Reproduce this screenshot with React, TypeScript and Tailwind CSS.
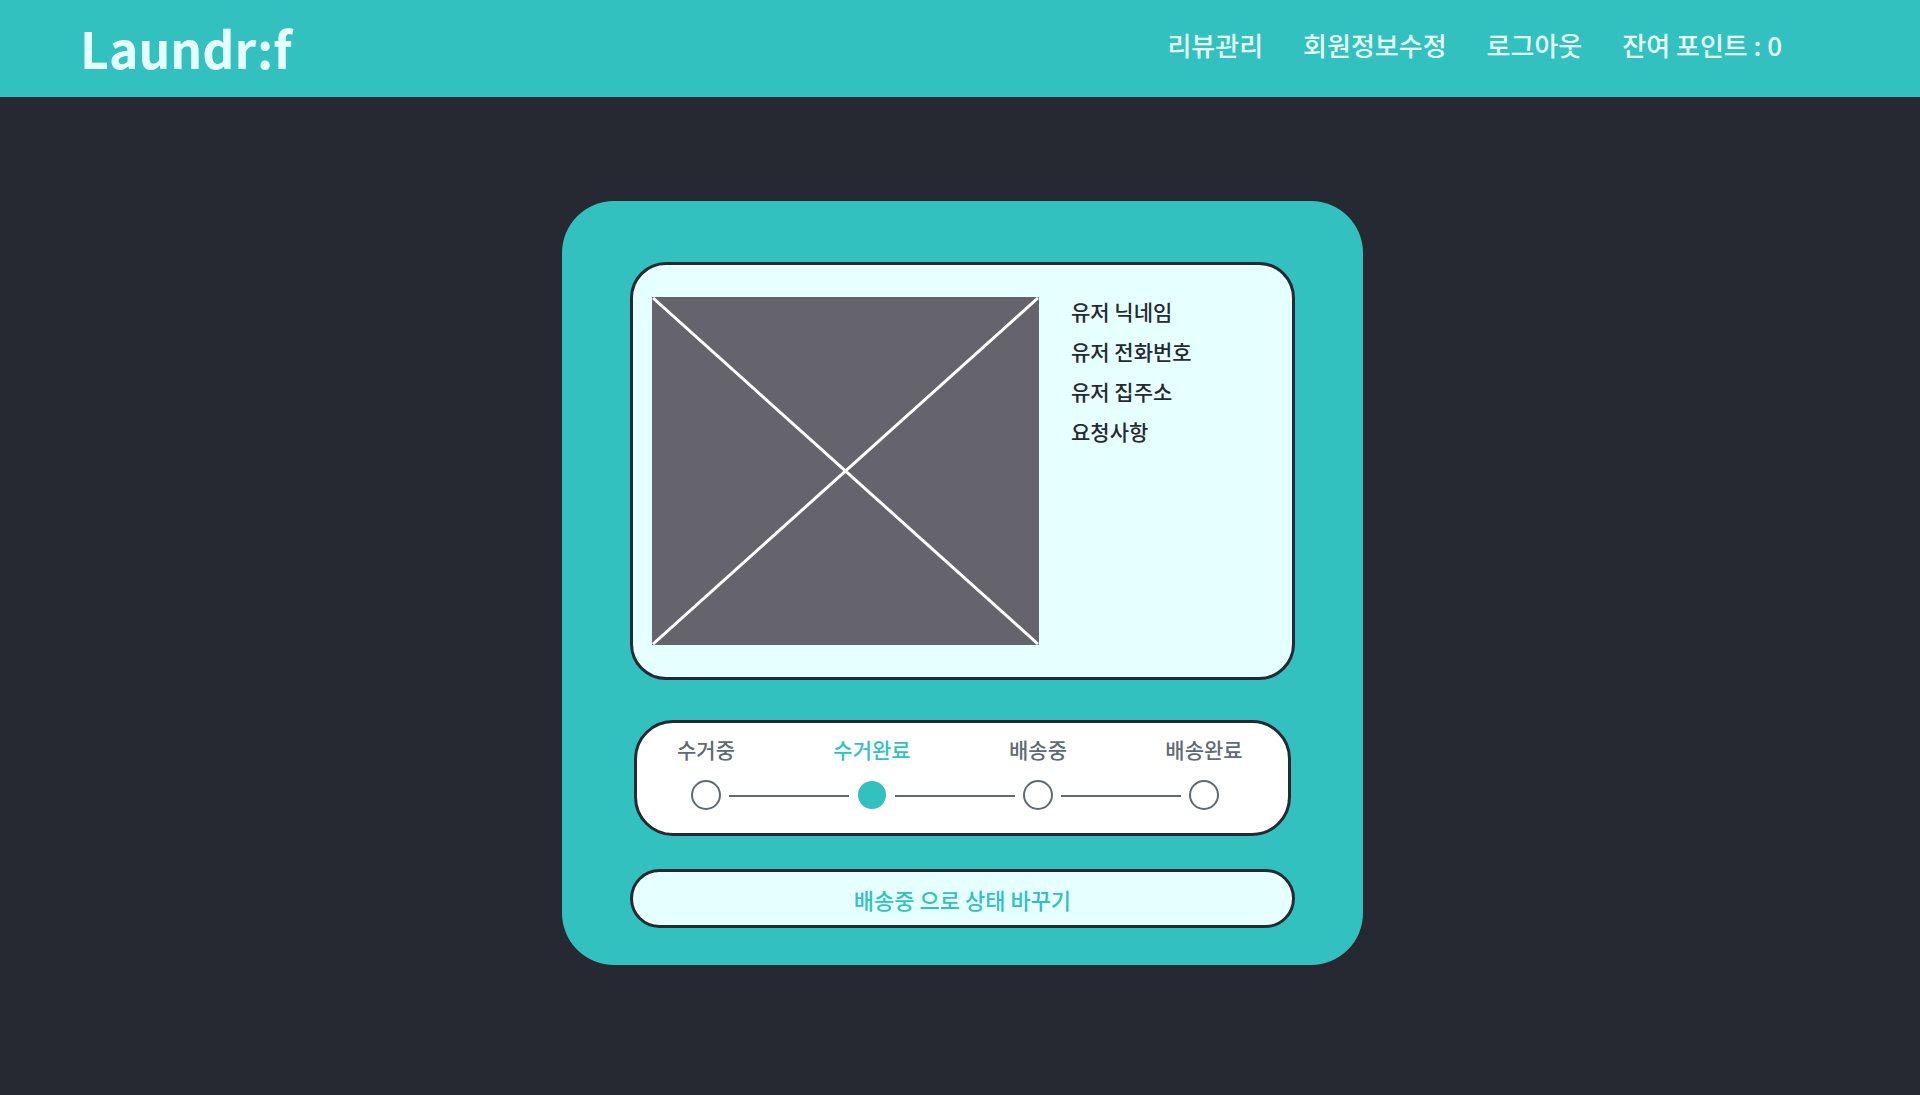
import { Fragment } from "react";

const navItems = [
  { label: "리뷰관리", href: "#reviews" },
  { label: "회원정보수정", href: "#profile" },
  { label: "로그아웃", href: "#logout" },
];

const userInfo = ["유저 닉네임", "유저 전화번호", "유저 집주소", "요청사항"];

const steps = ["수거중", "수거완료", "배송중", "배송완료"];

function Header() {
  return (
    <header className="flex h-[97px] items-center justify-between bg-[#33c1bf] pl-20 pr-[138px] text-[#e6ffff]">
      <a href="#home" className="pb-1 text-[50px] leading-[72px] font-bold">
        Laundr:f
      </a>
      <nav className="flex gap-10 pb-2 text-[26px] leading-[38px] font-medium">
        {navItems.map((item) => (
          <a key={item.href} href={item.href}>
            {item.label}
          </a>
        ))}
        <span>잔여 포인트 : 0</span>
      </nav>
    </header>
  );
}

function ImagePlaceholder() {
  return (
    <svg
      viewBox="0 0 387 348"
      className="h-[348px] w-[387px] shrink-0 bg-[#65646d]"
      role="img"
      aria-label="세탁물 사진"
    >
      <path d="M1 1L386 347M386 1L1 347" stroke="#fff" strokeWidth="3" />
    </svg>
  );
}

function OrderInfo() {
  return (
    <section className="flex gap-8 rounded-[36px] border-3 border-[#272932] bg-[#e6ffff] py-8 pl-[19px] pr-6">
      <ImagePlaceholder />
      <ul className="flex flex-col gap-3 text-[21px] leading-[28px] font-medium text-[#272932]">
        {userInfo.map((info) => (
          <li key={info}>{info}</li>
        ))}
      </ul>
    </section>
  );
}

function Step({ label, active }: { label: string; active: boolean }) {
  return (
    <li
      aria-current={active ? "step" : undefined}
      className={`flex w-[30px] shrink-0 flex-col items-center gap-4 whitespace-nowrap ${
        active ? "text-[#33c1bf]" : "text-[#5f6a73]"
      }`}
    >
      <span className="text-[21px] leading-[30px] font-medium">{label}</span>
      {active ? (
        <span className="m-px size-7 rounded-full bg-[#33c1bf]" />
      ) : (
        <span className="size-[30px] rounded-full border-2 border-[#5f6a73]" />
      )}
    </li>
  );
}

function Progress({ current }: { current: number }) {
  return (
    <ol className="mx-1 mt-10 flex rounded-[39px] border-3 border-[#272932] bg-white pt-[11px] pb-[23px] pl-[54px] pr-[69px]">
      {steps.map((step, i) => (
        <Fragment key={step}>
          {i > 0 && (
            <li aria-hidden="true" className="mx-2 mb-[13px] h-0.5 flex-1 self-end bg-[#5f6a73]" />
          )}
          <Step label={step} active={i === current} />
        </Fragment>
      ))}
    </ol>
  );
}

export default function App() {
  return (
    <div className="min-h-screen bg-[#272932] font-['Noto_Sans_CJK_KR',sans-serif]">
      <Header />
      <main className="flex justify-center pt-[104px] pb-[129px] pl-[5px]">
        <div className="w-full max-w-[801px] rounded-[52px] bg-[#33c1bf] px-[68px] pt-[61px] pb-[37px]">
          <OrderInfo />
          <Progress current={1} />
          <button
            type="button"
            className="mt-[33px] h-[59px] w-full rounded-full border-3 border-[#272932] bg-[#e6ffff] text-[22px] leading-[30px] font-medium text-[#33c1bf]"
          >
            배송중 으로 상태 바꾸기
          </button>
        </div>
      </main>
    </div>
  );
}
